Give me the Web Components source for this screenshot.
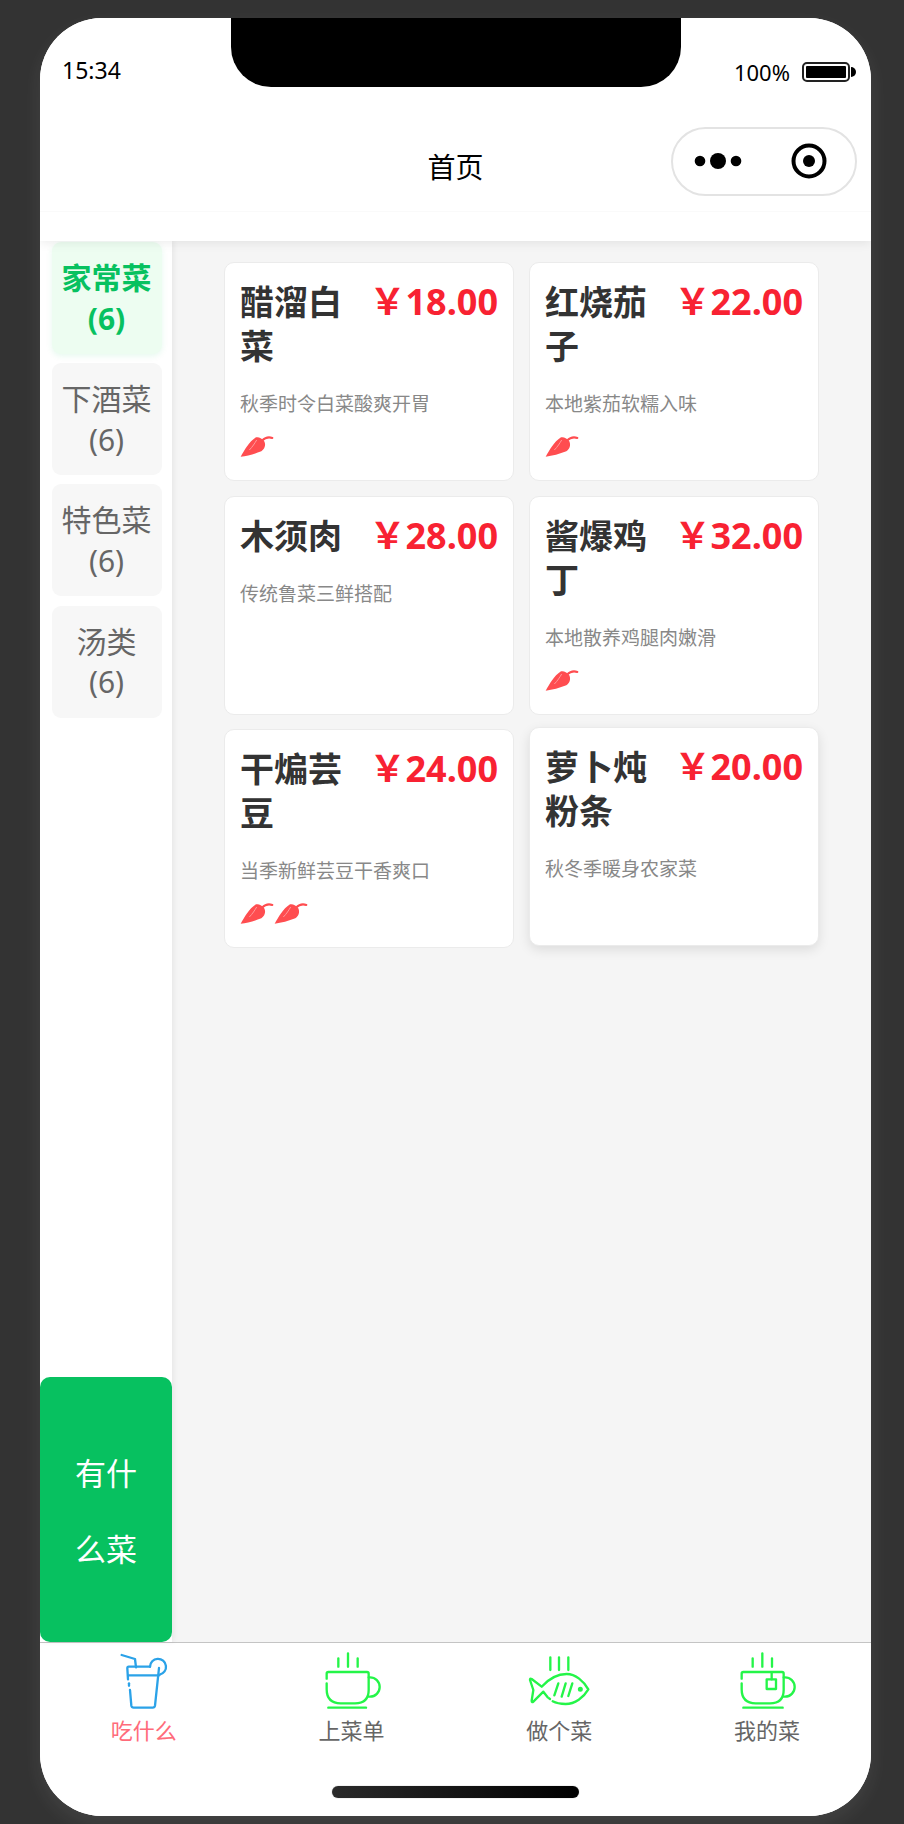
<!DOCTYPE html>
<html lang="zh-CN">
<head>
<meta charset="utf-8">
<title>首页</title>
<style>
  html, body { margin: 0; padding: 0; }
  body {
    background: #333;
    font-family: "Noto Sans", "Noto Sans CJK SC", sans-serif;
  }
</style>
</head>
<body>
<phone-frame>
  <status-bar time="15:34" battery="100%"></status-bar>
  <nav-bar>首页</nav-bar>
  <menu-page>
    <side-menu slot="side">
      <category-tab count="6" active>家常菜</category-tab>
      <category-tab count="6">下酒菜</category-tab>
      <category-tab count="6">特色菜</category-tab>
      <category-tab count="6">汤类</category-tab>
      <green-button slot="action">有什么菜</green-button>
    </side-menu>
    <dish-card price="18.00" spicy="1">醋溜白菜<span slot="desc">秋季时令白菜酸爽开胃</span></dish-card>
    <dish-card price="22.00" spicy="1">红烧茄子<span slot="desc">本地紫茄软糯入味</span></dish-card>
    <dish-card price="28.00" spicy="0">木须肉<span slot="desc">传统鲁菜三鲜搭配</span></dish-card>
    <dish-card price="32.00" spicy="1">酱爆鸡丁<span slot="desc">本地散养鸡腿肉嫩滑</span></dish-card>
    <dish-card price="24.00" spicy="2">干煸芸豆<span slot="desc">当季新鲜芸豆干香爽口</span></dish-card>
    <dish-card price="20.00" spicy="0" hovered>萝卜炖粉条<span slot="desc">秋冬季暖身农家菜</span></dish-card>
  </menu-page>
  <tab-bar>
    <tab-item icon="drink" active>吃什么</tab-item>
    <tab-item icon="cup">上菜单</tab-item>
    <tab-item icon="fish">做个菜</tab-item>
    <tab-item icon="tea">我的菜</tab-item>
  </tab-bar>
</phone-frame>

<script>
class PhoneFrame extends HTMLElement {
  constructor() {
    super();
    this.attachShadow({ mode: "open" });
    this.shadowRoot.innerHTML = `
      <style>
        :host {
          display: block;
          position: relative;
          width: 831px;
          height: 1798px;
          margin: 18px 0 8px 40px;
          background: #fff;
          border-radius: 62px;
          overflow: hidden;
          box-shadow: 0 8px 20px rgba(255, 255, 255, 0.08);
        }
        .wrap {
          display: flex;
          flex-direction: column;
          height: 100%;
        }
        .notch {
          position: absolute;
          z-index: 5;
          top: 0;
          left: 191px;
          width: 450px;
          height: 69px;
          background: #000;
          border-radius: 0 0 40px 40px;
        }
      </style>
      <div class="wrap"><slot></slot></div>
      <div class="notch"></div>
    `;
  }
}

class StatusBar extends HTMLElement {
  constructor() {
    super();
    this.attachShadow({ mode: "open" });
  }
  connectedCallback() {
    this.shadowRoot.innerHTML = `
      <style>
        :host {
          display: flex;
          justify-content: space-between;
          align-items: flex-start;
          position: relative;
          z-index: 4;
          flex: none;
          height: 109px;
          padding: 35px 15px 0 22px;
          box-sizing: border-box;
          background: #fff;
          color: #000;
        }
        .time { font-size: 23px; line-height: 34px; }
        .right { display: flex; align-items: center; gap: 12px; margin-top: 2px; }
        .pct { font-size: 22px; line-height: 34px; }
        .batt {
          width: 48px;
          height: 20px;
          box-sizing: border-box;
          border: 2px solid #222;
          border-radius: 5px;
          padding: 2px;
          margin-right: 1px;
        }
        .batt div { height: 100%; background: #000; border-radius: 1px; }
        .tip { width: 5px; height: 10px; background: #000; border-radius: 0 5px 5px 0; margin-left: -12px; }
      </style>
      <span class="time">${this.getAttribute("time")}</span>
      <div class="right">
        <span class="pct">${this.getAttribute("battery")}</span>
        <div class="batt"><div></div></div>
        <div class="tip"></div>
      </div>
    `;
  }
}

class NavBar extends HTMLElement {
  constructor() {
    super();
    this.attachShadow({ mode: "open" });
    this.shadowRoot.innerHTML = `
      <style>
        :host {
          display: flex;
          align-items: flex-start;
          justify-content: center;
          position: relative;
          z-index: 3;
          flex: none;
          height: 114px;
          box-sizing: border-box;
          background: #fff;
          box-shadow: 0 2px 10px rgba(0, 0, 0, 0.08);
          color: #000;
          font-size: 28px;
        }
        .title { line-height: 40px; margin-top: 20px; }
        .line {
          position: absolute;
          left: 0;
          right: 0;
          top: 84px;
          border-top: 1px solid #fafafa;
        }
        .capsule {
          position: absolute;
          top: 0;
          right: 14px;
          width: 186px;
          height: 69px;
          box-sizing: border-box;
          border: 2px solid #e3e3e3;
          border-radius: 35px;
        }
        svg { display: block; }
      </style>
      <div class="line"></div>
      <span class="title"><slot></slot></span>
      <div class="capsule">
        <svg width="182" height="65" viewBox="0 0 182 65">
          <circle cx="27" cy="32" r="5.3" fill="#000"/>
          <circle cx="45" cy="32" r="8" fill="#000"/>
          <circle cx="63" cy="32" r="5.3" fill="#000"/>
          <circle cx="136" cy="32" r="15.5" fill="none" stroke="#000" stroke-width="4"/>
          <circle cx="136" cy="32" r="6" fill="#000"/>
        </svg>
      </div>
    `;
  }
}

class MenuPage extends HTMLElement {
  constructor() {
    super();
    this.attachShadow({ mode: "open" });
    this.shadowRoot.innerHTML = `
      <style>
        :host {
          display: flex;
          flex: 1;
          min-height: 0;
          background: #f5f5f5;
        }
        .grid {
          flex: 1;
          display: grid;
          grid-template-columns: 1fr 1fr;
          grid-auto-rows: 219px;
          gap: 14.5px 15px;
          align-content: start;
          padding: 21px 52px 0 52px;
        }
      </style>
      <slot name="side"></slot>
      <div class="grid"><slot></slot></div>
    `;
  }
}

class SideMenu extends HTMLElement {
  constructor() {
    super();
    this.attachShadow({ mode: "open" });
    this.shadowRoot.innerHTML = `
      <style>
        :host {
          display: flex;
          flex-direction: column;
          justify-content: space-between;
          flex: none;
          width: 132px;
          background: #fff;
          box-shadow: 2px 0 5px rgba(0, 0, 0, 0.06);
          position: relative;
          z-index: 1;
        }
        .list {
          display: flex;
          flex-direction: column;
          gap: 9.2px;
          padding: 1px 10px 0 12px;
        }
      </style>
      <div class="list"><slot></slot></div>
      <slot name="action"></slot>
    `;
  }
}

class CategoryTab extends HTMLElement {
  constructor() {
    super();
    this.attachShadow({ mode: "open" });
  }
  connectedCallback() {
    this.shadowRoot.innerHTML = `
      <style>
        :host {
          display: block;
          height: 112px;
          box-sizing: border-box;
          padding: 16px 6px;
          background: #f7f7f7;
          border-radius: 9px;
          color: #666;
          font-size: 30px;
          line-height: 40.5px;
          text-align: center;
        }
        :host([active]) {
          background: #edfdf1;
          color: #07c160;
          font-weight: 700;
          box-shadow: 0 2px 6px rgba(7, 193, 96, 0.1);
        }
        div { margin-left: -1px; }
      </style>
      <div><slot></slot></div>
      <div>(${this.getAttribute("count")})</div>
    `;
  }
}

class GreenButton extends HTMLElement {
  constructor() {
    super();
    this.attachShadow({ mode: "open" });
    this.shadowRoot.innerHTML = `
      <style>
        :host {
          display: flex;
          align-items: center;
          justify-content: center;
          height: 265px;
          padding: 3px 35px 0;
          box-sizing: border-box;
          background: #07c160;
          border-radius: 10px;
          color: #fff;
          font-size: 31px;
          line-height: 76px;
          text-align: center;
        }
      </style>
      <slot></slot>
    `;
  }
}

const CHILI = `
  <svg width="34" height="24" viewBox="48 48 102 72">
    <path fill="#ff4d50" d="M50 110C62 90 74 66 96 52C104 50 112 54 120 62C126 72 124 86 112 94C92 102 70 108 50 110Z"/>
    <path fill="none" stroke="#ff4d50" stroke-width="6" stroke-linecap="round" d="M114 62C122 54 134 50 145 54"/>
    <path fill="none" stroke="#ff9a9c" stroke-width="3" d="M98 60C92 70 86 80 76 90"/>
  </svg>`;

class DishCard extends HTMLElement {
  constructor() {
    super();
    this.attachShadow({ mode: "open" });
  }
  connectedCallback() {
    const spicy = Number(this.getAttribute("spicy"));
    this.shadowRoot.innerHTML = `
      <style>
        :host {
          display: block;
          box-sizing: border-box;
          padding: 17px 15px;
          background: #fff;
          border: 1px solid #ebebeb;
          border-radius: 10px;
        }
        :host([hovered]) {
          transform: translateY(-2px);
          box-shadow: 0 4px 12px rgba(0, 0, 0, 0.1);
        }
        .top { display: flex; justify-content: space-between; gap: 8px; }
        .name {
          flex: 1;
          min-width: 0;
          color: #333;
          font-size: 34px;
          font-weight: 700;
          line-height: 44px;
        }
        .price {
          flex: none;
          color: #f82232;
          font-size: 36px;
          font-weight: 700;
          line-height: 44px;
          white-space: nowrap;
        }
        .desc {
          margin-top: 20px;
          color: #888;
          font-size: 19px;
          line-height: 32px;
        }
        .chilis { display: flex; margin-top: 16px; }
        .chilis:empty { display: none; }
        svg { display: block; }
      </style>
      <div class="top">
        <div class="name"><slot></slot></div>
        <div class="price">￥${this.getAttribute("price")}</div>
      </div>
      <div class="desc"><slot name="desc"></slot></div>
      <div class="chilis">${CHILI.repeat(spicy)}</div>
    `;
  }
}

class TabBar extends HTMLElement {
  constructor() {
    super();
    this.attachShadow({ mode: "open" });
    this.shadowRoot.innerHTML = `
      <style>
        :host {
          display: block;
          position: relative;
          flex: none;
          height: 174px;
          box-sizing: border-box;
          background: #fff;
          border-top: 1px solid #c4c4c4;
        }
        .items { display: grid; grid-template-columns: repeat(4, 1fr); }
        .home {
          position: absolute;
          left: 292px;
          top: 143px;
          width: 247px;
          height: 12px;
          border-radius: 6px;
          background: linear-gradient(90deg, #2a2a2a, #000);
          box-shadow: 0 0 1px #777;
        }
      </style>
      <div class="items"><slot></slot></div>
      <div class="home"></div>
    `;
  }
}

// 图标坐标按原图裁剪区域描的，viewBox 的 x 偏移用来对齐每个 tab 的中心
const ICONS = {
  drink: {
    x: -18,
    color: "#2ba2e8",
    body: `
      <path d="M35 45L75 57L78 82"/>
      <path d="M120 80H56Q52 80 52 85L54 118"/>
      <path d="M55 106H147"/>
      <path d="M57 130V137"/>
      <path d="M60 150L64 197Q65 203 71 203H128Q134 203 135 197L147 84"/>
      <path d="M120 80A24 24 0 1 1 149 104"/>`
  },
  cup: {
    x: 6,
    color: "#24f548",
    body: `
      <path d="M85 55V80M114 40V80M143 55V80"/>
      <path d="M50 116V101Q50 96 55 96H171Q176 96 176 101V150Q176 190 135 190H92Q50 190 50 148V130"/>
      <path d="M176 112H180A29 29 0 0 1 180 170H176"/>
      <path d="M55 203H168"/>`
  },
  fish: {
    x: 0,
    color: "#24f548",
    body: `
      <path d="M94 52V90M120 52V90M148 52V90"/>
      <path d="M101 184C112 190 126 192 140 192C168 192 194 172 208 148C194 124 170 102 143 102C116 102 90 116 68 140L38 117Q32 114 33 120L43 150L38 182Q38 188 43 185L73 155L86 172"/>
      <path d="M90 175L93 177"/>
      <path d="M118 130L106 166M140 130L128 170M160 130L148 168"/>
      <circle cx="184" cy="148" r="4" fill="currentColor"/>`
  },
  tea: {
    x: -9,
    color: "#24f548",
    body: `
      <path d="M68 55V80M97 40V80M126 55V80"/>
      <path d="M35 116V101Q35 96 40 96H156Q161 96 161 101V150Q161 190 120 190H77Q35 190 35 148V130"/>
      <path d="M161 112H165A29 29 0 0 1 165 170H161"/>
      <path d="M40 203H158"/>
      <path d="M125 97V118"/>
      <rect x="110" y="118" width="28" height="29"/>`
  }
};

class TabItem extends HTMLElement {
  constructor() {
    super();
    this.attachShadow({ mode: "open" });
  }
  connectedCallback() {
    const icon = ICONS[this.getAttribute("icon")];
    this.shadowRoot.innerHTML = `
      <style>
        :host {
          display: flex;
          flex-direction: column;
          align-items: center;
          color: #666;
          font-size: 22px;
          line-height: 30px;
        }
        :host([active]) { color: #ff6b7a; }
        svg { display: block; margin-bottom: 4px; color: ${icon.color}; }
      </style>
      <svg width="80" height="68" viewBox="${icon.x} 9 240 204" fill="none" stroke="${icon.color}"
           stroke-width="7" stroke-linecap="round" stroke-linejoin="round">${icon.body}</svg>
      <slot></slot>
    `;
  }
}

customElements.define("phone-frame", PhoneFrame);
customElements.define("status-bar", StatusBar);
customElements.define("nav-bar", NavBar);
customElements.define("menu-page", MenuPage);
customElements.define("side-menu", SideMenu);
customElements.define("category-tab", CategoryTab);
customElements.define("green-button", GreenButton);
customElements.define("dish-card", DishCard);
customElements.define("tab-bar", TabBar);
customElements.define("tab-item", TabItem);
</script>
</body>
</html>
